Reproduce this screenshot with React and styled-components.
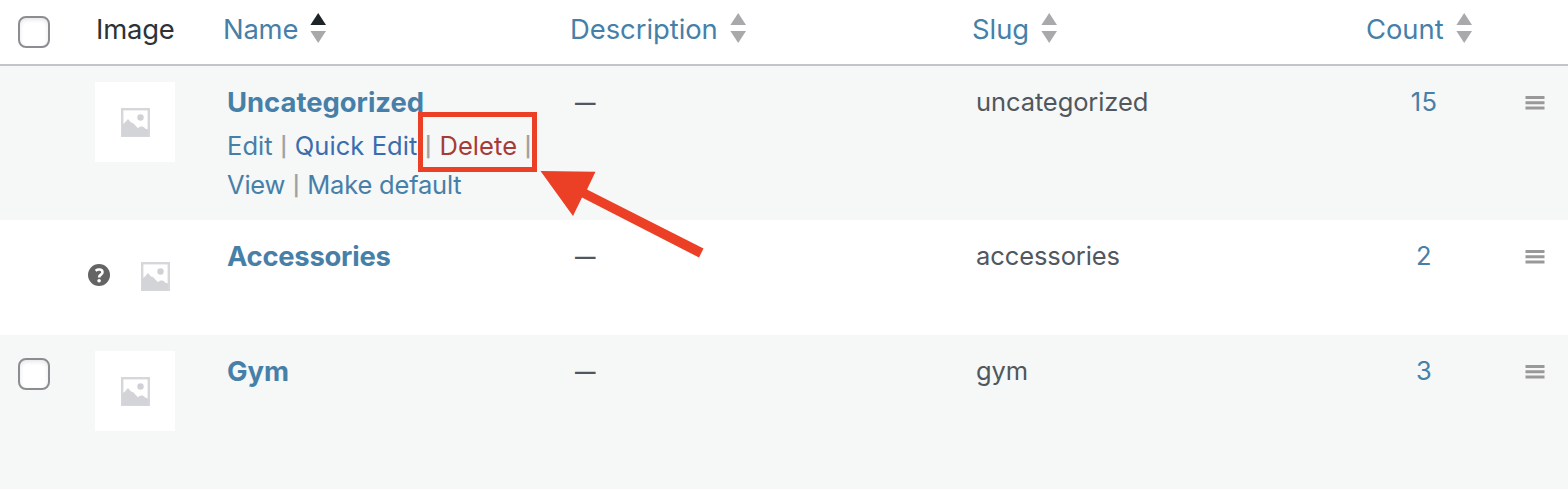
import React from 'react'
import styled, { createGlobalStyle } from 'styled-components'

const GlobalStyle = createGlobalStyle`
    * {
        box-sizing: border-box;
    }
    body {
        margin: 0;
        background-color: #fff;
        font-family: Inter, "Liberation Sans", sans-serif;
        font-weight: 440;
        color: #50575e;
        overflow: hidden;
    }
`

const Container = styled.div`
    position: relative;
    width: 1568px;
    height: 504px;
    background-color: #fff;
`

const Row = styled.div`
    display: grid;
    grid-template-columns: 84px 139px 347px 402px 376px 152px 1fr;
    height: ${props => props.$height}px;
    background-color: ${props => props.$striped ? '#f6f7f7' : '#fff'};
`

const HeaderRow = styled(Row)`
    border-bottom: 2px solid #c3c4c7;
    font-size: 27.4px;
    line-height: 34px;
`

const HeaderCell = styled.div`
    display: flex;
    align-items: flex-start;
    gap: 12px;
    padding: 12px 0 0 ${props => props.$indent || 0}px;
    color: ${props => props.$link ? '#4680a8' : '#2c3338'};
    letter-spacing: ${props => props.$track || -0.04}px;
    white-space: nowrap;
`

const CheckCell = styled.div`
    padding: ${props => props.$top}px 0 0 18px;
`

const Checkbox = styled.div`
    width: 32px;
    height: 32px;
    border: 2px solid #8c8d90;
    border-radius: 8px;
    background-color: #fff;
    box-shadow: inset 0 2px 4px rgba(0, 0, 0, 0.1);
`

const Sorter = styled.svg`
    width: 16px;
    height: 30px;
    margin-top: 1px;
    flex: none;
`

const ImageCell = styled.div`
    display: flex;
    align-items: flex-start;
    padding: 16px 0 0 ${props => props.$help ? 4 : 11}px;
`

const HelpIcon = styled.svg`
    width: 22px;
    height: 22px;
    margin: 28px 5px 0 0;
    flex: none;
`

const Thumb = styled.div`
    width: 80px;
    height: 80px;
    display: flex;
    justify-content: center;
    align-items: center;
    background-color: #fff;
    flex: none;
`

const Cell = styled.div`
    padding: 16px 0 0 4px;
    font-size: 25.5px;
    line-height: 39px;
    letter-spacing: -0.1px;
    white-space: nowrap;
`

const Dash = styled(Cell)`
    padding: 17px 0 0 5px;
    font-size: 20.5px;
    font-weight: 600;
`

const Title = styled.div`
    padding-top: 1px;
    color: #4680a8;
    font-size: 27.4px;
    font-weight: 650;
    line-height: 39px;
    letter-spacing: ${props => props.$track || 0}px;
`

const Actions = styled.div`
    display: flex;
    flex-direction: column;
    padding-top: 4px;
`

const ActionLine = styled.div`
    display: flex;
    height: 39px;
    letter-spacing: ${props => props.$track || 0}px;
`

const Action = styled.span`
    color: ${props => props.$color || '#4680a8'};
`

const Divider = styled.span`
    width: 22px;
    padding-top: 2px;
    color: #a0a1a3;
    font-size: 19.5px;
    font-weight: 600;
    text-align: center;
`

const Count = styled(Cell)`
    padding-left: 0;
    color: #4680a8;
    letter-spacing: 0.2px;
    text-align: center;
`

const HandleCell = styled.div`
    display: flex;
    justify-content: center;
    padding: 30px 0 0 2px;
`

const Handle = styled.svg`
    width: 20px;
    height: 14px;
`

const Highlight = styled.div`
    position: absolute;
    left: 418px;
    top: 112px;
    width: 119px;
    height: 60px;
    border: 5px solid #eb4026;
`

const Arrow = styled.svg`
    position: absolute;
    left: 538px;
    top: 168px;
    width: 170px;
    height: 94px;
`

const Sort = ({ active }) => (
    <Sorter viewBox="0 0 16 30">
        <path d="M8.2 0 L16 12 H0.4 Z" fill={active ? '#1d2327' : '#a9a9ab'} />
        <path d="M0.4 18 H16 L8.2 30 Z" fill="#a9a9ab" />
    </Sorter>
)

const Placeholder = () => (
    <svg width="29" height="29" viewBox="0 0 29 29">
        <rect x="1.2" y="1.2" width="26.6" height="26.6" fill="#fff" stroke="#d6d7da" strokeWidth="2.4" />
        <circle cx="19.5" cy="9.5" r="3.2" fill="#d0d1d4" />
        <path d="M1 16.5 L3.5 15 L7 11 L10 14.5 L12 15 L17 20.3 C19 18 22.5 18 24 20.5 L27 21.5 V28 H1 Z" fill="#d3d4d7" />
    </svg>
)

const Help = () => (
    <HelpIcon viewBox="0 0 22 22">
        <circle cx="11" cy="11" r="11" fill="#646464" />
        <path d="M7.6 6.7 C10.2 4.8 14.5 5.1 14.5 8.2 C14.5 10.8 11.1 10.5 11.1 13.5" fill="none" stroke="#fff" strokeWidth="2.6" />
        <circle cx="11.1" cy="16.7" r="1.8" fill="#fff" />
    </HelpIcon>
)

const headers = [
    { label: 'Image', indent: 12, track: -0.2 },
    { label: 'Name', link: true, active: true, track: -0.2 },
    { label: 'Description', link: true },
    { label: 'Slug', link: true },
    { label: 'Count', link: true, indent: 18 },
]

const categories = [
    { name: 'Uncategorized', slug: 'uncategorized', count: 15, height: 154, striped: true, actions: true },
    { name: 'Accessories', slug: 'accessories', count: 2, height: 115, help: true, track: -0.25 },
    { name: 'Gym', slug: 'gym', count: 3, height: 154, striped: true, checkbox: true },
]

const RowActions = () => (
    <Actions>
        <ActionLine $track={0.07}>
            <Action>Edit</Action>
            <Divider>|</Divider>
            <Action $color="#3a6cb0">Quick Edit</Action>
            <Divider>|</Divider>
            <Action $color="#a63a38">Delete</Action>
            <Divider>|</Divider>
        </ActionLine>
        <ActionLine $track={-0.2}>
            <Action>View</Action>
            <Divider>|</Divider>
            <Action>Make default</Action>
        </ActionLine>
    </Actions>
)

const App = () => {
    return (
        <Container>
            <GlobalStyle />
            <HeaderRow $height={66}>
                <CheckCell $top={16}><Checkbox /></CheckCell>
                {headers.map((item) => (
                    <HeaderCell key={item.label} $link={item.link} $indent={item.indent} $track={item.track}>
                        {item.label}
                        {item.link && <Sort active={item.active} />}
                    </HeaderCell>
                ))}
            </HeaderRow>
            {categories.map((item) => (
                <Row key={item.slug} $height={item.height} $striped={item.striped}>
                    <CheckCell $top={23}>{item.checkbox && <Checkbox />}</CheckCell>
                    <ImageCell $help={item.help}>
                        {item.help && <Help />}
                        <Thumb><Placeholder /></Thumb>
                    </ImageCell>
                    <Cell>
                        <Title $track={item.track}>{item.name}</Title>
                        {item.actions && <RowActions />}
                    </Cell>
                    <Dash>—</Dash>
                    <Cell>{item.slug}</Cell>
                    <Count>{item.count}</Count>
                    <HandleCell>
                        <Handle viewBox="0 0 20 14">
                            <path d="M0.5 0 H19.5 V3 H0.5 Z M0.5 5.3 H19.5 V8.3 H0.5 Z M0.5 10.6 H19.5 V13.6 H0.5 Z" fill="#999" />
                        </Handle>
                    </HandleCell>
                </Row>
            ))}
            <Highlight />
            <Arrow viewBox="0 0 170 94">
                <path d="M2.5 3 L57.5 3.7 L49 21.5 L165.5 80.5 L161 89.5 L44 29.5 L35 48 Z" fill="#eb4026" />
            </Arrow>
        </Container>
    )
}

export default App
